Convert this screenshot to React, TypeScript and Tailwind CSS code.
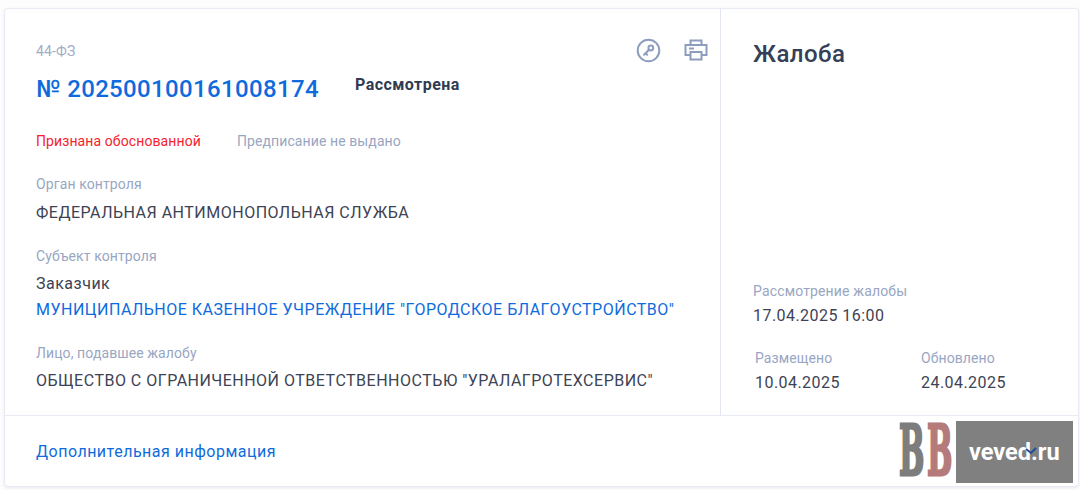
export default function App() {
  return (
    <div className="relative h-[490px] w-[1080px] overflow-hidden bg-[#fdfdfe] pt-2 pl-1 pr-px font-['Roboto',sans-serif]">
      <div className="flex h-[479px] flex-col rounded border border-[#e8eaf4] bg-white shadow-[0_1px_3px_rgba(120,130,170,0.15)]">
        <div className="flex h-[407px] border-b border-[#e8eaf4]">
          {/* левая колонка */}
          <div className="w-[716px] border-r border-[#e4e7f3] pl-[31px] pr-3 pt-[33px]">
            <div className="flex h-[18px] items-center justify-between">
              <span className="text-sm leading-[18px] tracking-[0.15px] text-[#a3adc4]">44-ФЗ</span>
              <div className="flex items-center gap-[23px] -mt-[2px]">
                <svg width="25" height="25" viewBox="0 0 25 25" fill="none" stroke="#8d9dbd" strokeWidth="2">
                  <circle cx="12.5" cy="12.5" r="10.8" />
                  <circle cx="14.8" cy="10" r="2.4" />
                  <path d="M13 11.8 L8 16.8 M9.6 15.2 L11.2 16.8" strokeLinecap="round" />
                </svg>
                <svg width="24" height="22" viewBox="0 0 24 22" fill="none" stroke="#8d9dbd" strokeWidth="2">
                  <path d="M6.5 6V1.5h11V6" />
                  <rect x="1.5" y="6" width="21" height="10" />
                  <rect x="6.5" y="13" width="11" height="7.5" fill="white" />
                  <path d="M5 9.5h5" />
                </svg>
              </div>
            </div>
            <div className="mt-[13px] flex items-start">
              <span className="text-[24px] font-medium leading-[32px] tracking-[0.35px] text-[#0f6bdc]">№ 202500100161008174</span>
              <span className="ml-9 text-base font-bold leading-[24px] tracking-[0.45px] text-[#2f3b52]">Рассмотрена</span>
            </div>
            <div className="mt-[26px] flex text-sm leading-5 tracking-[0.1px]">
              <span className="text-[#f5222d]">Признана обоснованной</span>
              <span className="ml-9 text-[#98a6c2]">Предписание не выдано</span>
            </div>
            <div className="mt-[23px] text-sm leading-5 tracking-[0.1px] text-[#98a6c2]">Орган контроля</div>
            <div className="mt-[7px] text-base leading-6 tracking-[0.5px] text-[#3d4354]">ФЕДЕРАЛЬНАЯ АНТИМОНОПОЛЬНАЯ СЛУЖБА</div>
            <div className="mt-[21px] text-sm leading-5 tracking-[0.1px] text-[#98a6c2]">Субъект контроля</div>
            <div className="mt-[6px] text-base leading-6 tracking-[0.5px] text-[#3d4354]">Заказчик</div>
            <div className="mt-[2px] text-base leading-6 tracking-[0.5px] text-[#0f6bdc]">МУНИЦИПАЛЬНОЕ КАЗЕННОЕ УЧРЕЖДЕНИЕ "ГОРОДСКОЕ БЛАГОУСТРОЙСТВО"</div>
            <div className="mt-[21px] text-sm leading-5 tracking-[0.1px] text-[#98a6c2]">Лицо, подавшее жалобу</div>
            <div className="mt-[6px] text-base leading-6 tracking-[0.5px] text-[#3d4354]">ОБЩЕСТВО С ОГРАНИЧЕННОЙ ОТВЕТСТВЕННОСТЬЮ "УРАЛАГРОТЕХСЕРВИС"</div>
          </div>
          {/* правая колонка */}
          <div className="flex flex-1 flex-col pl-[32px] pt-[29px]">
            <div className="text-[24px] font-medium leading-8 tracking-[0.45px] text-[#344057]">Жалоба</div>
            <div className="mt-auto text-sm leading-5 tracking-[0.15px] text-[#98a6c2]">Рассмотрение жалобы</div>
            <div className="mt-[3px] text-base leading-6 tracking-[0.45px] text-[#3d4354]">17.04.2025 16:00</div>
            <div className="mb-[20px] mt-[20px] flex pl-[2px]">
              <div className="w-[166px]">
                <div className="text-sm leading-5 tracking-[0.1px] text-[#98a6c2]">Размещено</div>
                <div className="mt-[3px] text-base leading-6 tracking-[0.45px] text-[#3d4354]">10.04.2025</div>
              </div>
              <div>
                <div className="text-sm leading-5 tracking-[0.1px] text-[#98a6c2]">Обновлено</div>
                <div className="mt-[3px] text-base leading-6 tracking-[0.45px] text-[#3d4354]">24.04.2025</div>
              </div>
            </div>
          </div>
        </div>
        <div className="flex flex-1 items-center pl-[31px] pt-[2px] text-base tracking-[0.5px] text-[#0f6bdc]">Дополнительная информация</div>
      </div>
      {/* водяной знак */}
      <span className="absolute left-[899px] top-[423px] origin-left scale-x-[0.43] font-['DejaVu_Serif',serif] text-[70px] font-bold leading-[56px] text-[#7d7d7d] [-webkit-text-stroke:3px_#7d7d7d]">B</span>
      <span className="absolute left-[927px] top-[423px] origin-left scale-x-[0.43] font-['DejaVu_Serif',serif] text-[70px] font-bold leading-[56px] text-[#b57b7b] [-webkit-text-stroke:3px_#b57b7b]">B</span>
      <div className="absolute left-[956px] top-[421px] flex h-[62px] w-[117px] items-center justify-center bg-[#808080] text-[24px] font-bold text-white">
        <span className="scale-x-[0.98]">veved.ru</span>
        <svg className="absolute left-[68px] top-[25px]" width="14" height="10" viewBox="0 0 14 10" fill="none" stroke="#1d4f96" strokeWidth="2">
          <path d="M2 3l5 4 5-5" />
        </svg>
      </div>
    </div>
  )
}
